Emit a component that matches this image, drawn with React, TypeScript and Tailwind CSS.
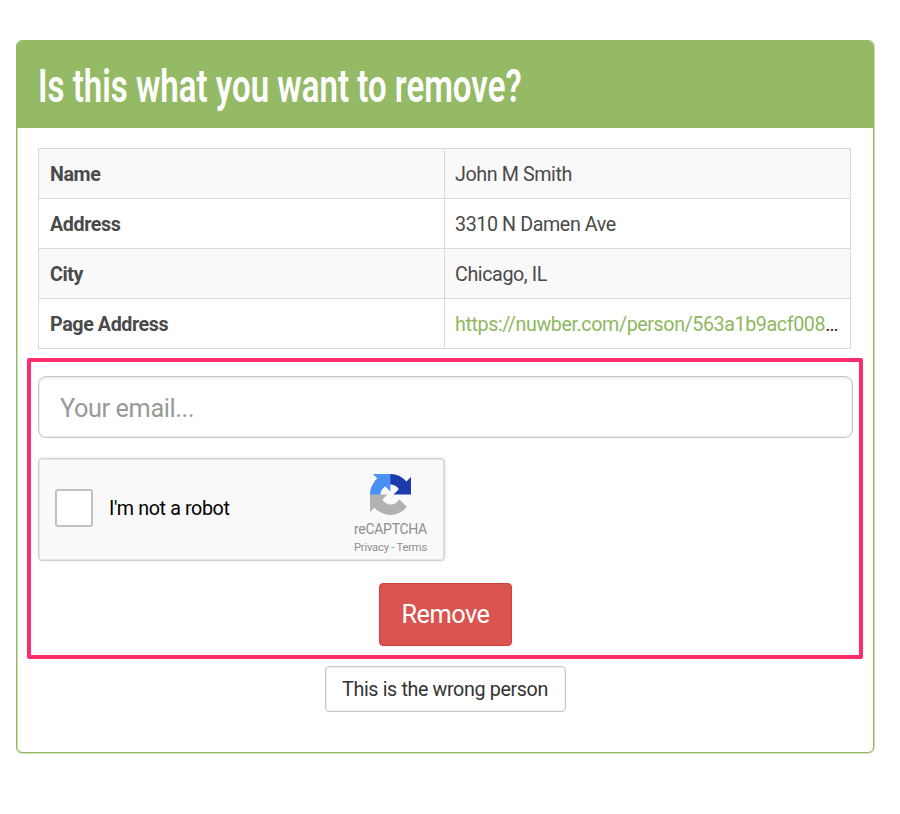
const ROWS = [
  { label: "Name", value: "John M Smith" },
  { label: "Address", value: "3310 N Damen Ave" },
  { label: "City", value: "Chicago, IL" },
  { label: "Page Address", value: "https://nuwber.com/person/563a1b9acf008", link: true },
]

function RecaptchaLogo() {
  return (
    <svg viewBox="0 0 64 64" className="h-[41px] w-[41px]">
      <path fill="#1c3aa9" d="M64 31.955l-.033-1.37V4.687l-7.16 7.16C50.948 4.674 42.033.093 32.05.093c-10.4 0-19.622 4.96-25.458 12.64l11.736 11.86a15.55 15.55 0 0 1 4.754-5.334c2.05-1.6 4.952-2.906 8.968-2.906.485 0 .86.057 1.135.163 4.976.393 9.288 3.14 11.828 7.124l-8.307 8.307L64 31.953" />
      <path fill="#4a90f5" d="M31.862.094l-1.37.033H4.594l7.16 7.16C4.58 13.147 0 22.06 0 32.046c0 10.4 4.96 19.622 12.64 25.458L24.5 45.768a15.55 15.55 0 0 1-5.334-4.754c-1.6-2.05-2.906-4.952-2.906-8.968 0-.485.057-.86.163-1.135.393-4.976 3.14-9.288 7.124-11.828l8.307 8.307L31.86.095" />
      <path fill="#b2b2b2" d="M.001 32.045l.033 1.37v25.898l7.16-7.16c5.86 7.173 14.774 11.754 24.76 11.754 10.4 0 19.622-4.96 25.458-12.64l-11.736-11.86a15.55 15.55 0 0 1-4.754 5.334c-2.05 1.6-4.952 2.906-8.968 2.906-.485 0-.86-.057-1.135-.163-4.976-.393-9.288-3.14-11.828-7.124l8.307-8.307c-10.522.04-22.4.066-27.295-.005" />
    </svg>
  )
}

function Recaptcha() {
  return (
    <div className="mt-5 flex h-[103px] w-[407px] items-start rounded-[4px] border border-[#d2d2d2] bg-[#f9f9f9] pl-4 shadow-[inset_0_0_0_1px_#e6e6e6,0_0_4px_rgba(0,0,0,0.08)]">
      <div className="mt-[30px] h-[38px] w-[38px] rounded-[3px] border-2 border-[#c1c1c1] bg-white" />
      <span className="mt-10 ml-4 text-[19.7px] leading-5 tracking-[-0.38px] text-black">I'm not a robot</span>
      <div className="mt-[15px] mr-[17px] ml-auto flex flex-col items-center text-[#8f8f8f]">
        <RecaptchaLogo />
        <span className="mt-[7px] text-[14px] leading-[14px] tracking-[-0.3px]">reCAPTCHA</span>
        <span className="mt-[6px] text-[11.2px] leading-[12px] tracking-[-0.2px]">Privacy - Terms</span>
      </div>
    </div>
  )
}

export default function App() {
  return (
    <div className="h-[814px] bg-white pt-10 pl-4 font-['Roboto',sans-serif]">
      <div className="h-[713px] w-[858px] rounded-[6px] border border-[#94ba66] bg-white shadow-[inset_1px_0_0_#cfe0b9,1px_0_0_#cfe0b9,0_1px_0_#cfe0b9]">
        <div className="h-[87px] rounded-t-[5px] bg-[#94ba66] pt-px pl-[21px]">
          <h1 className="w-max origin-left scale-x-[0.718] text-[46px] leading-[88px] font-semibold whitespace-nowrap text-white">
            Is this what you want to remove?
          </h1>
        </div>

        <div className="pt-5 pl-[21px]">
          <table className="w-[813px] table-fixed border-collapse text-[19.7px] tracking-[-0.41px] text-[#4a4a4a]">
            <tbody>
              {ROWS.map(row => (
                <tr key={row.label} className="h-[50px] odd:bg-[#f9f9f9]">
                  <th className="border border-[#d9d9d9] px-[11px] pt-0.5 pb-0 text-left font-bold">{row.label}</th>
                  <td className="border border-[#d9d9d9] px-2.5 pt-0.5 pb-0">
                    {row.link ? (
                      <div className="flex">
                        <a className="text-[#8fb75f]">{row.value}</a>
                        <span className="text-[#333333]">…</span>
                      </div>
                    ) : (
                      row.value
                    )}
                  </td>
                </tr>
              ))}
            </tbody>
          </table>
        </div>

        {/* Highlighted form area */}
        <div className="mt-[9px] ml-2.5 h-[301px] w-[836px] rounded-[2px] border-4 border-[#ff2c6b] pt-[14px] pl-[7px]">
          <input
            placeholder="Your email..."
            className="block h-[62px] w-[815px] rounded-[8px] border border-[#c6c6c6] px-[21px] pt-0.5 text-[25.3px] tracking-[-0.4px] shadow-[inset_0_0_0_1px_#eeeeee,inset_0_2px_2px_rgba(0,0,0,0.06)] placeholder:text-[#999999]"
          />
          <Recaptcha />
          <div className="mt-[22px] flex w-[815px] justify-center">
            <button className="h-[63px] w-[133px] rounded-[4px] border border-[#d43f3a] bg-[#d9534f] text-[25.3px] tracking-[-0.5px] text-white">
              Remove
            </button>
          </div>
        </div>

        <div className="mt-[7px] flex justify-center">
          <button className="h-[46px] w-[241px] rounded-[4px] border border-[#c8c8c8] bg-white pt-0.5 text-[19.7px] tracking-[-0.36px] text-[#333333] shadow-[inset_0_0_0_1px_#f0f0f0]">
            This is the wrong person
          </button>
        </div>
      </div>
    </div>
  )
}
